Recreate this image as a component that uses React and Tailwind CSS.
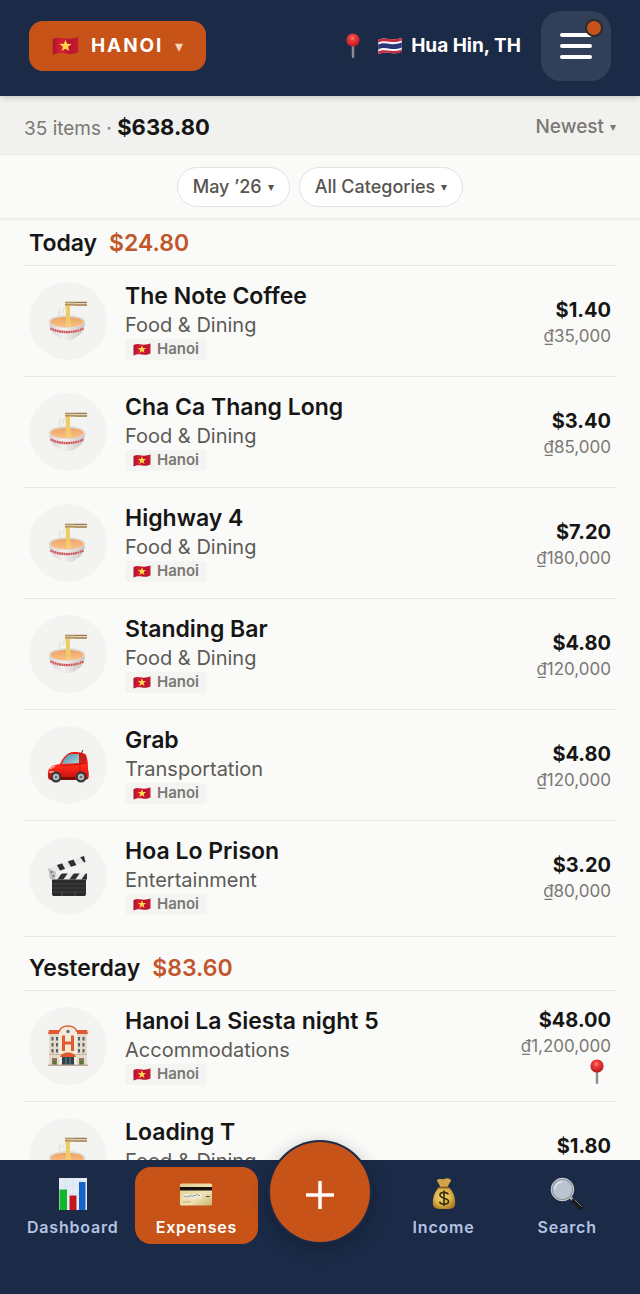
import React, { useState } from 'react';

const VietnamFlag = ({ className }) => (
    <svg viewBox="0 0 36 26" className={className} aria-hidden="true">
        <defs>
            <linearGradient id="vn" x1="0" x2="1" y1="0" y2="0">
                <stop offset="0" stopColor="#a8122c" />
                <stop offset="0.3" stopColor="#d81e35" />
                <stop offset="0.65" stopColor="#b9122e" />
                <stop offset="1" stopColor="#c81a33" />
            </linearGradient>
        </defs>
        <path d="M1 4c6-3 11-2 17-1s11 0 17-2v20c-6 3-11 3-17 2s-11-1-17 2z" fill="url(#vn)" />
        <path d="M18 4.5l2.1 5.6 6 .1-4.700 3.800 1.700 5.800-5.100-3.300-5.100 3.300 1.700-5.800-4.700-3.800 6-.1z" fill="#ffd84a" />
    </svg>
);

const ThaiFlag = ({ className }) => (
    <svg viewBox="0 0 36 26" className={className} aria-hidden="true">
        <path d="M1 4c6-3 11-2 17-1s11 0 17-2v20c-6 3-11 3-17 2s-11-1-17 2z" fill="#f4f5f8" />
        <path d="M1 4c6-3 11-2 17-1s11 0 17-2v4c-6 2-11 3-17 2s-11-2-17 1z" fill="#c5283d" />
        <path d="M1 11c6-3 11-2 17-1s11 0 17-2v7c-6 2-11 3-17 2s-11-2-17 1z" fill="#2a3478" />
        <path d="M1 21c6-3 11-2 17-1s11 0 17-2v3c-6 3-11 3-17 2s-11-1-17 2z" fill="#c5283d" />
    </svg>
);

const Pin = ({ className }) => (
    <svg viewBox="0 0 16 26" className={className} aria-hidden="true">
        <defs>
            <radialGradient id="pin" cx="0.45" cy="0.35" r="0.6">
                <stop offset="0" stopColor="#ff8a80" />
                <stop offset="0.35" stopColor="#ec3b39" />
                <stop offset="1" stopColor="#bf1d24" />
            </radialGradient>
        </defs>
        <rect x="6.800" y="12" width="2.400" height="13" rx="1" fill="#8d8d8f" />
        <circle cx="8" cy="7" r="6.600" fill="url(#pin)" />
    </svg>
);

const Noodles = ({ className }) => (
    <svg viewBox="0 0 42 42" className={className} aria-hidden="true">
        <defs>
            <linearGradient id="bowl" x1="0" x2="1" y1="0" y2="0">
                <stop offset="0" stopColor="#d5d4d2" />
                <stop offset="0.4" stopColor="#f3f2f0" />
                <stop offset="1" stopColor="#c4c2c0" />
            </linearGradient>
            <linearGradient id="broth" x1="0" x2="0" y1="0" y2="1">
                <stop offset="0" stopColor="#efa264" />
                <stop offset="1" stopColor="#fbc189" />
            </linearGradient>
        </defs>
        <path d="M13 15c-3-3 1-4 0-7M16 13c-2-3 2-3 1-6" stroke="#e3e1de" strokeWidth="1.500" fill="none" />
        <path d="M2 22c0 8 4 13 9 15 2 4 16 4 18 0 5-2 9-7 9-15z" fill="url(#bowl)" />
        <ellipse cx="20" cy="21.500" rx="18.200" ry="6.500" fill="#dfdcd8" />
        <ellipse cx="20" cy="22" rx="16.500" ry="5.300" fill="url(#broth)" />
        <path d="M3 26.500c8 5.500 26 5.500 34 0l-1 3.500c-8 4.500-24 4.500-32 0z" fill="#f0cfcf" />
        <path d="M3.500 28.300c8 5 25 5 33 0" stroke="#c9555a" strokeWidth="2.200" strokeDasharray="1.800 0.500" fill="none" />
        <path d="M18.500 4h4.500v14l1 8h-5z" fill="#f3d675" />
        <path d="M20 5v20M21.700 5v19" stroke="#dfb552" strokeWidth="0.500" />
        <path d="M18 2.500h22M18 5h22" stroke="#9b7a45" strokeWidth="1.500" />
        <path d="M18 3h10M18 5.500h10" stroke="#d6b876" strokeWidth="0.800" />
    </svg>
);

const Car = ({ className }) => (
    <svg viewBox="0 0 42 42" className={className} aria-hidden="true">
        <defs>
            <linearGradient id="carBody" x1="0" x2="0" y1="0" y2="1">
                <stop offset="0" stopColor="#e8170f" />
                <stop offset="0.5" stopColor="#ff2a1c" />
                <stop offset="1" stopColor="#c20d0a" />
            </linearGradient>
            <linearGradient id="glass" x1="0" x2="1" y1="0" y2="1">
                <stop offset="0" stopColor="#4f8fa0" />
                <stop offset="1" stopColor="#a5d9e2" />
            </linearGradient>
        </defs>
        <path d="M34 10l2-4" stroke="#333" strokeWidth="1" />
        <path d="M1 32c-1-8 4-11 12-12 3-6 7-12 14-12 6 0 11 1 12 3 2 5 2 10 2 14 1 3 1 8 0 10l-3 1H5c-3 0-4-1-4-4z" fill="url(#carBody)" />
        <path d="M15 20c2-5 5-10 10-10h7v9z" fill="url(#glass)" />
        <path d="M34 10c2 0 3 1 4 2 1 2 1 4 1 6l-4 .5z" fill="#b32621" />
        <path d="M14 21c8 1 18-1 26-2M33 9v20" stroke="#a80e0b" strokeWidth="0.700" fill="none" />
        <path d="M3 25l5-3M2 28h5" stroke="#ffb3a6" strokeWidth="1.300" />
        <path d="M14 33h14v3H14z" fill="#7c0c0a" />
        <circle cx="9" cy="33" r="5.500" fill="#373737" />
        <circle cx="9" cy="33" r="3.200" fill="#b9babd" />
        <circle cx="9" cy="33" r="1.300" fill="#68696c" />
        <circle cx="34" cy="33" r="5.500" fill="#373737" />
        <circle cx="34" cy="33" r="3.200" fill="#b9babd" />
        <circle cx="34" cy="33" r="1.300" fill="#68696c" />
    </svg>
);

const Clapper = ({ className }) => (
    <svg viewBox="0 0 42 42" className={className} aria-hidden="true">
        <defs>
            <clipPath id="armTop"><path d="M1 13L37 1l1.500 6L3 19z" /></clipPath>
            <clipPath id="armLow"><path d="M4 18.500h36v6H4z" /></clipPath>
        </defs>
        <path d="M5 23h34v16c0 1.500-1 2-2 2H7c-1 0-2-.5-2-2z" fill="#2b2b2d" />
        <path d="M5 29h34M5 33h34M5 37h34" stroke="#505053" strokeWidth="0.600" />
        <path d="M15 37v4M28 37v4" stroke="#68686b" strokeWidth="0.700" />
        <g clipPath="url(#armTop)">
            <path d="M0 0h42v22H0z" fill="#e9e9ea" />
            <path d="M7 5l8 14h6L12 3zM18 2l8 13h6L24 0zM30-2l9 12h5L36-3z" fill="#303032" />
        </g>
        <g clipPath="url(#armLow)">
            <path d="M4 18h37v7H4z" fill="#e9e9ea" />
            <path d="M10 25l5-7h6l-5 7zM22 25l5-7h6l-5 7zM34 25l5-7h4v7z" fill="#303032" />
        </g>
        <path d="M1 13l8 4-1 7H3z" fill="#bfc0c2" />
        <circle cx="4.500" cy="17" r="1" fill="#66676a" />
        <circle cx="6.500" cy="21" r="1" fill="#66676a" />
    </svg>
);

const Hotel = ({ className }) => (
    <svg viewBox="0 0 42 42" className={className} aria-hidden="true">
        <path d="M2 8h38v32H2z" fill="#e5d9c8" />
        <path d="M12 8c1-5 5-7 9-7s8 2 9 7v32H12z" fill="#f4ead9" />
        <path d="M12 7c1-4 5-6 9-6s8 2 9 6" stroke="#dd5b36" strokeWidth="1.400" fill="none" />
        <path d="M2 5h10v4H1zM30 5h10l1 4H30z" fill="#df5a32" />
        <circle cx="21" cy="6.500" r="1.700" fill="#5a7180" />
        <path d="M16.500 10.500v15.500M25.500 10.500v15.500M16.500 18h9" stroke="#e05b33" strokeWidth="3" />
        <path d="M5.500 12v16M10 12v16M32 12v16M36.500 12v16" stroke="#51616e" strokeWidth="2" strokeDasharray="3.500 2.500" />
        <path d="M2 29.500h38" stroke="#c6b59e" strokeWidth="1.200" />
        <path d="M15 31h12v9H15z" fill="#29444c" />
        <path d="M19 31v9M23 31v9" stroke="#7f9a9c" strokeWidth="0.800" />
        <path d="M13 32c1-6 15-6 16 0z" fill="#e2592f" />
        <path d="M5 33h5v7H5zM32 33h5v7h-5z" fill="#8b7762" />
        <circle cx="7.500" cy="37.500" r="1.800" fill="#4d7b34" />
        <circle cx="34.500" cy="37.500" r="1.800" fill="#4d7b34" />
        <path d="M1 39.500h40v1.500H1z" fill="#b8aa98" />
    </svg>
);

const BarChart = () => (
    <svg viewBox="0 0 34 34" className="size-[34px]" aria-hidden="true">
        <path d="M3 1h28v32H3z" fill="#e3ebf7" />
        <path d="M3 9h28M3 17h28M3 25h28M10 1v32M17 1v32M24 1v32" stroke="#d3deee" strokeWidth="0.600" />
        <path d="M3.500 12.500h7.500v20.500H3.500z" fill="#12b52c" />
        <path d="M13.500 18.500h7v14.500h-7z" fill="#c3161d" />
        <path d="M23 5h6.500v28H23z" fill="#1463c8" />
    </svg>
);

const CreditCard = () => (
    <svg viewBox="0 0 34 34" className="size-[34px]" aria-hidden="true">
        <defs>
            <linearGradient id="card" x1="0" x2="1" y1="0" y2="1">
                <stop offset="0" stopColor="#e0cc8c" />
                <stop offset="0.6" stopColor="#efe2b4" />
                <stop offset="1" stopColor="#cdb46c" />
            </linearGradient>
        </defs>
        <rect x="1" y="6.500" width="32" height="22" rx="1.500" fill="url(#card)" />
        <path d="M1 10h32v3.500H1z" fill="#15130f" />
        <path d="M4 17h19v5H4z" fill="#efe8cd" />
        <path d="M5 20c1-3 2 2 3 0s2 1 3-1 2 2 3 0 2 1 3-1 2 2 4 0" stroke="#5b7ca4" strokeWidth="0.800" fill="none" />
        <path d="M27 19.500h3.500" stroke="#4a4534" strokeWidth="1" />
        <path d="M4 25h8" stroke="#b59f5d" strokeWidth="0.800" />
    </svg>
);

const MoneyBag = () => (
    <svg viewBox="0 0 34 34" className="size-[34px]" aria-hidden="true">
        <defs>
            <radialGradient id="bag" cx="0.45" cy="0.45" r="0.6">
                <stop offset="0" stopColor="#f3d777" />
                <stop offset="0.6" stopColor="#dcb448" />
                <stop offset="1" stopColor="#a87a22" />
            </radialGradient>
        </defs>
        <path d="M10 3c3-2 4 0 7-1s5-1 7 1c1 1-3 4-3 7h-8c0-3-4-6-3-7z" fill="#d2a447" />
        <path d="M13 10h8c5 3 8 11 7 18-1 4-4 4-11 4s-10 0-11-4c-1-7 2-15 7-18z" fill="url(#bag)" />
        <path d="M12.500 10.500h9" stroke="#8a5a20" strokeWidth="1.800" />
        <path d="M21.200 17.500c-1-3-8.200-3-8.200.5 0 4 8.500 2.500 8.500 6.500 0 3.500-8 3.500-9 .2M17 13.500v15.500" stroke="#3d2f10" strokeWidth="1.700" fill="none" />
    </svg>
);

const Magnifier = () => (
    <svg viewBox="0 0 34 34" className="size-[34px]" aria-hidden="true">
        <path d="M20.500 20.500l3 3" stroke="#a5a8ad" strokeWidth="3" />
        <path d="M24 24l6.500 6.500" stroke="#1c1c1e" strokeWidth="5" strokeLinecap="round" />
        <path d="M24.500 22.500l7 7" stroke="#7f8084" strokeWidth="1" />
        <circle cx="12.500" cy="12.500" r="10.700" fill="#bac4d1" stroke="#8d9299" strokeWidth="2" />
        <circle cx="12.500" cy="12.500" r="11.200" fill="none" stroke="#dadde1" strokeWidth="0.800" />
        <path d="M5 12c0-4 3-7 7-7" stroke="#dfe6ef" strokeWidth="1.500" fill="none" />
    </svg>
);

const categoryIcons = {
    'Food & Dining': Noodles,
    'Transportation': Car,
    'Entertainment': Clapper,
    'Accommodations': Hotel,
};

const days = [
    {
        label: 'Today',
        total: '$24.80',
        items: [
            { id: 1, name: 'The Note Coffee', category: 'Food & Dining', usd: '$1.40', local: '₫35,000' },
            { id: 2, name: 'Cha Ca Thang Long', category: 'Food & Dining', usd: '$3.40', local: '₫85,000' },
            { id: 3, name: 'Highway 4', category: 'Food & Dining', usd: '$7.20', local: '₫180,000' },
            { id: 4, name: 'Standing Bar', category: 'Food & Dining', usd: '$4.80', local: '₫120,000' },
            { id: 5, name: 'Grab', category: 'Transportation', usd: '$4.80', local: '₫120,000' },
            { id: 6, name: 'Hoa Lo Prison', category: 'Entertainment', usd: '$3.20', local: '₫80,000' },
        ],
    },
    {
        label: 'Yesterday',
        total: '$83.60',
        items: [
            { id: 7, name: 'Hanoi La Siesta night 5', category: 'Accommodations', usd: '$48.00', local: '₫1,200,000', pinned: true },
            { id: 8, name: 'Loading T', category: 'Food & Dining', usd: '$1.80', local: '₫45,000' },
        ],
    },
];

const ExpenseRow = ({ item }) => {
    const Icon = categoryIcons[item.category];
    return (
        <li className="flex items-center gap-[18px] px-1.5 py-4 border-b border-[#e5e5e3] last:border-b-0">
            <div className="size-[78px] shrink-0 rounded-full bg-[#f3f3f1] flex items-center justify-center">
                <Icon className="size-[42px]" />
            </div>
            <div className="flex-1 min-w-0">
                <h3 className="text-[23px] leading-[29px] font-semibold text-[#161614] truncate">{item.name}</h3>
                <p className="text-xl leading-7 text-[#5c5a56]">{item.category}</p>
                <span className="flex w-fit h-[21px] items-center gap-1.5 rounded bg-[#f4f4f2] px-2 text-[15px] font-semibold text-[#7b7873]">
                    <VietnamFlag className="w-[18px] h-[13px]" />
                    Hanoi
                </span>
            </div>
            <div className={`flex flex-col items-end ${item.pinned ? '' : 'pt-1'}`}>
                <p className="text-xl leading-[26px] font-bold text-[#161614]">{item.usd}</p>
                <p className="text-[17px] leading-[26px] text-[#7b7873]">{item.local}</p>
                {item.pinned && <Pin className="w-4 h-[26px] mr-1.5" />}
            </div>
        </li>
    );
};

const tabs = [
    { name: 'Dashboard', Icon: BarChart },
    { name: 'Expenses', Icon: CreditCard },
    { name: 'Add' },
    { name: 'Income', Icon: MoneyBag },
    { name: 'Search', Icon: Magnifier },
];

const App = () => {
    const [activeTab, setActiveTab] = useState('Expenses');

    return (
        <div className="h-screen flex flex-col overflow-hidden bg-[#fafaf9] font-['Inter',sans-serif]">
            <header className="relative z-10 shrink-0 h-24 bg-[#1b2a47] px-[29px] flex items-center justify-between shadow-md">
                <button className="-mt-1 h-[50px] px-[23px] rounded-[14px] bg-[#c75318] text-white flex items-center gap-3">
                    <VietnamFlag className="w-[27px] h-5" />
                    <span className="text-[19px] font-bold tracking-widest">HANOI</span>
                    <span className="text-base text-[#f6d3c0]">▾</span>
                </button>
                <div className="-mt-1 flex items-center gap-5">
                    <p className="flex items-center text-[19px] font-bold text-white">
                        <Pin className="w-4 h-[26px] mr-4" />
                        <ThaiFlag className="w-[26px] h-[18px] mr-2" />
                        Hua Hin, TH
                    </p>
                    <button aria-label="Menu" className="relative size-[70px] rounded-[20px] bg-[#323f59] flex flex-col items-center justify-center gap-[7px]">
                        <span className="w-8 h-1 rounded-full bg-white" />
                        <span className="w-8 h-1 rounded-full bg-white" />
                        <span className="w-8 h-1 rounded-full bg-white" />
                        <span className="absolute top-2 right-2 size-[18px] rounded-full border-2 border-[#2b2a30] bg-[#c75318]" />
                    </button>
                </div>
            </header>

            <div className="shrink-0 h-[59px] px-6 pt-1 flex items-center justify-between bg-[#f1f1ef] border-b border-[#e7e7e5]">
                <p className="text-[19px] text-[#7b7873]">
                    35 items · <strong className="text-[22px] font-bold text-[#161614]">$638.80</strong>
                </p>
                <button className="text-[19px] font-medium text-[#7b7873] flex items-center gap-1.5">
                    Newest <span className="text-xs">▾</span>
                </button>
            </div>

            <div className="shrink-0 h-16 flex items-center justify-center gap-[9px] border-b border-[#e7e7e5] shadow-xs">
                <button className="h-10 px-[15px] rounded-full border border-[#e2e2e0] bg-white text-lg font-medium text-[#565450] flex items-center gap-1.5">
                    May ’26 <span className="text-xs">▾</span>
                </button>
                <button className="h-10 px-[15px] rounded-full border border-[#e2e2e0] bg-white text-lg font-medium text-[#565450] flex items-center gap-1.5">
                    All Categories <span className="text-xs">▾</span>
                </button>
            </div>

            <main className="flex-1 min-h-0 overflow-y-auto [scrollbar-width:none] px-[23px]">
                {days.map((day) => (
                    <section key={day.label} className="pt-[7px] first:pt-0 pb-[5px] border-b border-[#e5e5e3]">
                        <h2 className="flex items-center gap-3 px-1.5 pt-[7px] pb-[5px] text-[23px] leading-[34px] font-semibold text-[#161614] border-b border-[#e5e5e3]">
                            {day.label} <span className="text-[#c1562a]">{day.total}</span>
                        </h2>
                        <ul>
                            {day.items.map((item) => (
                                <ExpenseRow key={item.id} item={item} />
                            ))}
                        </ul>
                    </section>
                ))}
            </main>

            <nav className="relative z-10 shrink-0 bg-[#1b2a47] px-[11px] pt-[7px] pb-[50px] grid grid-cols-5">
                {tabs.map(({ name, Icon }) => {
                    if (!Icon) {
                        return (
                            <div key={name} className="relative">
                                <button
                                    aria-label="Add expense"
                                    className="absolute -top-[25px] left-1/2 -translate-x-1/2 size-[100px] pt-1.5 rounded-full bg-[#c75318] ring-2 ring-[#1b2a47] shadow-[0_4px_20px_rgba(0,0,0,0.3)] flex items-center justify-center"
                                >
                                    <svg viewBox="0 0 28 28" className="size-7" stroke="white" strokeWidth="3.500" aria-hidden="true">
                                        <path d="M14 0v28M0 14h28" />
                                    </svg>
                                </button>
                            </div>
                        );
                    }
                    const active = activeTab === name;
                    return (
                        <button
                            key={name}
                            onClick={() => setActiveTab(name)}
                            className={`h-[77px] pt-1 rounded-2xl flex flex-col items-center justify-center gap-1 text-base leading-6 font-semibold tracking-wider ${active ? 'bg-[#c75318] text-white' : 'text-[#b3c3e3]'}`}
                        >
                            <Icon />
                            {name}
                        </button>
                    );
                })}
            </nav>
        </div>
    );
};

export default App;
